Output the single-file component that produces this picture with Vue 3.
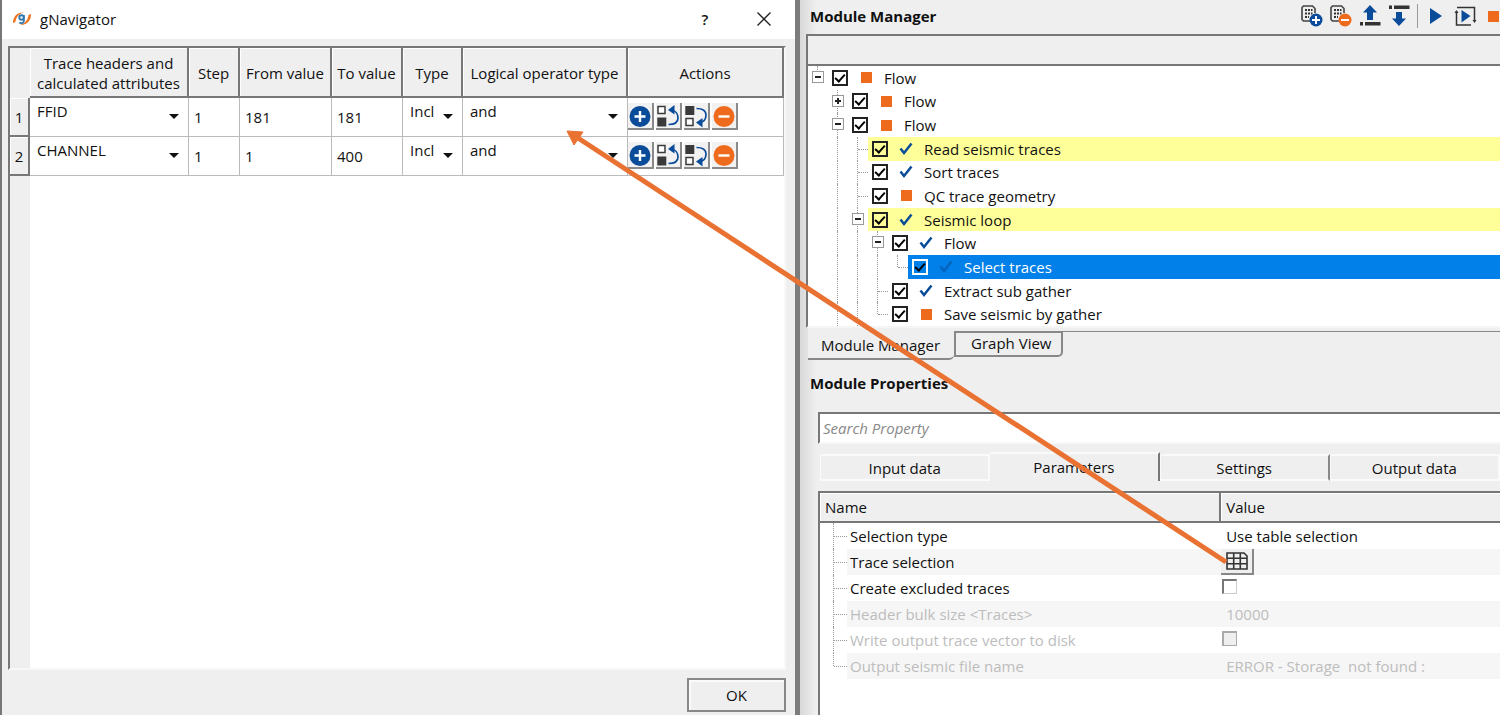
<script setup>
import { ref } from 'vue'

const rows = ref([
  { header: 'FFID', step: 1, from: 181, to: 181, type: 'Incl', op: 'and' },
  { header: 'CHANNEL', step: 1, from: 1, to: 400, type: 'Incl', op: 'and' }
])

const tree = ref([
  { name: 'Flow', guides: ['top minus'], state: 'stop', on: true },
  { name: 'Flow', guides: ['', 'line plus'], state: 'stop', on: true },
  { name: 'Flow', guides: ['', 'line minus'], state: 'stop', on: true },
  { name: 'Read seismic traces', guides: ['', 'line', 'line arm'], state: 'done', on: true, tone: 'yellow' },
  { name: 'Sort traces', guides: ['', 'line', 'line arm'], state: 'done', on: true },
  { name: 'QC trace geometry', guides: ['', 'line', 'line arm'], state: 'stop', on: true },
  { name: 'Seismic loop', guides: ['', 'line', 'line minus'], state: 'done', on: true, tone: 'yellow' },
  { name: 'Flow', guides: ['', 'line', 'line', 'line minus'], state: 'done', on: true },
  { name: 'Select traces', guides: ['', 'line', 'line', 'line', 'top arm'], state: 'done', on: true, tone: 'selected' },
  { name: 'Extract sub gather', guides: ['', 'line', 'line', 'line arm'], state: 'done', on: true },
  { name: 'Save seismic by gather', guides: ['', 'line', 'line', 'top arm'], state: 'stop', on: true }
])

const tabs = ['Input data', 'Parameters', 'Settings', 'Output data']
const activeTab = ref('Parameters')

const props = ref([
  { name: 'Selection type', kind: 'text', value: 'Use table selection' },
  { name: 'Trace selection', kind: 'grid' },
  { name: 'Create excluded traces', kind: 'check', on: false },
  { name: 'Header bulk size <Traces>', kind: 'text', value: '10000', off: true },
  { name: 'Write output trace vector to disk', kind: 'check', on: false, off: true },
  { name: 'Output seismic file name', kind: 'text', value: 'ERROR - Storage  not found :', off: true }
])
</script>

<template>
  <div class="screen">
    <section class="dialog" aria-label="gNavigator">
      <header class="titlebar">
        <svg class="logo" viewBox="0 0 20 16" aria-hidden="true">
          <path d="M1 12C1 6 5 1 12 1.600 7 3 4 6 3.500 11z" fill="#f0731f" />
          <path d="M19 3c.3 6-4 11.500-11 11 5-1.500 8-5 8.500-10z" fill="#f0731f" />
          <circle cx="9.500" cy="6.500" r="2.200" fill="none" stroke="#2f78ae" stroke-width="1.900" />
          <path d="M11.900 4v6c0 2.500-3.300 2.500-4.600 1.500" fill="none" stroke="#2f78ae" stroke-width="1.700" />
        </svg>
        <h1>gNavigator</h1>
        <button class="winbtn help" aria-label="Help">?</button>
        <button class="winbtn" aria-label="Close">
          <svg width="14" height="14" viewBox="0 0 14 14"><path d="M.5.5l13 13M13.500.5L.5 13.500" stroke="#222" stroke-width="1.400" /></svg>
        </button>
      </header>

      <div class="sheet">
        <table class="attrs">
          <colgroup>
            <col class="c-num" /><col class="c-head" /><col class="c-step" /><col class="c-from" />
            <col class="c-to" /><col class="c-type" /><col class="c-op" /><col class="c-act" />
          </colgroup>
          <thead>
            <tr>
              <th class="corner"></th>
              <th>Trace headers and<br />calculated attributes</th>
              <th>Step</th>
              <th>From value</th>
              <th>To value</th>
              <th>Type</th>
              <th>Logical operator type</th>
              <th>Actions</th>
            </tr>
          </thead>
          <tbody>
            <tr v-for="(r, i) in rows" :key="i">
              <th class="rownum" scope="row">{{ i + 1 }}</th>
              <td>
                <span class="pick"><select v-model="r.header" aria-label="Trace header"><option>FFID</option><option>CHANNEL</option></select></span>
              </td>
              <td class="num">{{ r.step }}</td>
              <td class="num">{{ r.from }}</td>
              <td class="num">{{ r.to }}</td>
              <td>
                <span class="pick"><select v-model="r.type" aria-label="Type"><option>Incl</option><option>Excl</option></select></span>
              </td>
              <td>
                <span class="pick"><select v-model="r.op" aria-label="Logical operator"><option>and</option><option>or</option></select></span>
              </td>
              <td>
                <div class="actions">
                  <button aria-label="Add row">
                    <svg viewBox="0 0 24 24"><circle cx="12" cy="12.500" r="10.500" fill="#0b4c9a" /><path d="M12 7v11M6.500 12.500h11" stroke="#fff" stroke-width="2.400" /></svg>
                  </button>
                  <button aria-label="Move up">
                    <svg viewBox="0 0 24 24" fill="none">
                      <rect x="2" y="2.500" width="7" height="7" fill="#fff" stroke="#3a3a3a" stroke-width="1.500" />
                      <rect x="1.300" y="13.500" width="9" height="9" fill="#3a3a3a" />
                      <path d="M12.500 20.500c6 0 9.500-2.500 9.500-6.500s-2.500-7.500-6.500-8" stroke="#0b4c9a" stroke-width="1.700" />
                      <path d="M12 6l6.500-5v9.500z" fill="#0b4c9a" />
                    </svg>
                  </button>
                  <button aria-label="Move down">
                    <svg viewBox="0 0 24 24" fill="none">
                      <rect x="1.300" y="2" width="9" height="9" fill="#3a3a3a" />
                      <rect x="2" y="14.500" width="7" height="7" fill="#fff" stroke="#3a3a3a" stroke-width="1.500" />
                      <path d="M12.500 4.500C18.500 4.500 22 7 22 11s-2.500 7-6.500 7.500" stroke="#0b4c9a" stroke-width="1.700" />
                      <path d="M12 18.500l6.500 5V14z" fill="#0b4c9a" />
                    </svg>
                  </button>
                  <button aria-label="Remove row">
                    <svg viewBox="0 0 24 24"><circle cx="12" cy="12.500" r="10.500" fill="#ee6a1c" /><path d="M6.500 12.500h11" stroke="#fff" stroke-width="2.400" /></svg>
                  </button>
                </div>
              </td>
            </tr>
          </tbody>
        </table>
      </div>

      <footer class="foot"><button class="ok">OK</button></footer>
    </section>

    <main class="side">
      <header class="bar">
        <h2>Module Manager</h2>
        <div class="tools">
          <button aria-label="Add module">
            <svg viewBox="0 0 24 24" fill="none">
              <path d="M11 17H3.500L2 15.500V3.500L3.500 2h9L15 4.500V9" stroke="#444" stroke-width="1.600" />
              <path d="M5 6h7.500M5 9.500h7.500M5 13h4" stroke="#333" stroke-width="2" stroke-dasharray="2 1" />
              <circle cx="16" cy="16" r="6.500" fill="#0b4c9a" /><path d="M16 12v8M12 16h8" stroke="#fff" stroke-width="1.900" />
            </svg>
          </button>
          <button aria-label="Remove module">
            <svg viewBox="0 0 24 24" fill="none">
              <path d="M11 17H3.500L2 15.500V3.500L3.500 2h9L15 4.500V9" stroke="#444" stroke-width="1.600" />
              <path d="M5 6h7.500M5 9.500h7.500M5 13h4" stroke="#333" stroke-width="2" stroke-dasharray="2 1" />
              <circle cx="16" cy="16" r="6.500" fill="#ee6a1c" /><path d="M12 16h8" stroke="#fff" stroke-width="1.900" />
            </svg>
          </button>
          <button aria-label="Move up">
            <svg viewBox="0 0 24 24"><path d="M12 1l7 7.500h-4V16H9V8.500H5z" fill="#0b4c9a" /><path d="M2 18h3v3.500H2zM7 18h15.500v3.500H7z" fill="#333" /></svg>
          </button>
          <button aria-label="Move down">
            <svg viewBox="0 0 24 24"><path d="M12 22l7-7.500h-4V8H9v6.500H5z" fill="#0b4c9a" /><path d="M2 1.500h3V5H2zM7 1.500h15.500V5H7z" fill="#333" /></svg>
          </button>
          <span class="sep"></span>
          <button aria-label="Run">
            <svg viewBox="0 0 24 24"><path d="M6 4l12 8-12 8z" fill="#0b4c9a" /></svg>
          </button>
          <button aria-label="Run all">
            <svg viewBox="0 0 24 24" fill="none">
              <path d="M3.500 7v14H18M4 3.500h17.500V17" stroke="#333" stroke-width="1.500" />
              <path d="M1.500 9l2-3 2 3zM19.500 16l2 3 2-3z" fill="#333" />
              <path d="M8.500 6l9 6-9 6.500z" fill="#0b4c9a" />
            </svg>
          </button>
          <button class="last" aria-label="Stop"><span class="square"></span></button>
        </div>
      </header>

      <div class="treehead"></div>
      <ul class="tree">
        <li v-for="(n, i) in tree" :key="i">
          <span v-for="(g, k) in n.guides" :key="k" class="guide" :class="g"></span>
          <label class="node" :class="n.tone">
            <input v-model="n.on" type="checkbox" />
            <span class="state">
              <span v-if="n.state === 'stop'" class="square"></span>
              <svg v-else width="14" height="14" viewBox="0 0 14 14"><path d="M1.500 6.500l3.500 4.500L12.500 1.500" fill="none" stroke="#0b4c9a" stroke-width="2.500" /></svg>
            </span>
            {{ n.name }}
          </label>
        </li>
      </ul>

      <nav class="views">
        <button class="view current">Module Manager</button>
        <button class="view">Graph View</button>
        <span class="rest"></span>
      </nav>

      <section class="properties">
        <h2>Module Properties</h2>
        <input class="search" type="text" placeholder="Search Property" aria-label="Search Property" />
        <div class="tabs" role="tablist">
          <button v-for="t in tabs" :key="t" role="tab" :aria-selected="t === activeTab" :class="{ active: t === activeTab }" @click="activeTab = t">{{ t }}</button>
        </div>
        <div class="propbox">
          <table class="props">
            <thead>
              <tr><th>Name</th><th>Value</th></tr>
            </thead>
            <tbody>
              <tr v-for="(p, i) in props" :key="p.name" :class="{ off: p.off }">
                <td>
                  <div class="pname"><span class="guide arm" :class="i === props.length - 1 ? 'top' : 'line'"></span><span class="ptext">{{ p.name }}</span></div>
                </td>
                <td class="pval">
                  <span v-if="p.kind === 'text'" class="ptxt">{{ p.value }}</span>
                  <button v-else-if="p.kind === 'grid'" class="gridbtn" aria-label="Edit table">
                    <svg width="22" height="18" viewBox="0 0 22 18" fill="none" stroke="#333" stroke-width="1.600"><path d="M1 1h17l3 3v13H1zM1 6.300h20M1 11.700h20M7.700 1v16M14.300 1v16" /></svg>
                  </button>
                  <input v-else v-model="p.on" type="checkbox" :disabled="p.off" :aria-label="p.name" />
                </td>
              </tr>
            </tbody>
          </table>
        </div>
      </section>
    </main>

    <svg class="arrow" viewBox="0 0 1500 715" preserveAspectRatio="none" aria-hidden="true">
      <path d="M1226 562L578 138" stroke="#e97132" stroke-width="5" />
      <path d="M567 131l16 1-9 13z" fill="#e97132" stroke="#e97132" stroke-width="1" />
    </svg>
  </div>
</template>

<style>
body {
  margin: 0;
  background: #efefef;
}
</style>

<style scoped>
*,
*::before,
*::after {
  box-sizing: border-box;
}
.screen {
  position: relative;
  display: flex;
  min-height: 100vh;
  overflow: hidden;
  background: #efefef;
  color: #111;
  font: 15px/20px "Open Sans", "Noto Sans", sans-serif;
}
button,
input,
select {
  font: inherit;
  color: inherit;
}
button {
  padding: 0;
  border: 0;
  background: none;
}
h1,
h2 {
  margin: 0;
  font-size: 15px;
}
h1 {
  flex: 1;
  font-weight: 400;
}
svg {
  display: block;
}

/* Dialog */
.dialog {
  display: flex;
  flex-direction: column;
  width: 53%;
  flex: none;
  border-left: 2px solid #777;
}
.titlebar {
  display: flex;
  align-items: center;
  height: 39px;
  padding: 0 22px 2px 10px;
  background: #fff;
}
.logo {
  width: 20px;
  height: 16px;
  margin-right: 8px;
}
.winbtn {
  display: grid;
  place-items: center;
  width: 18px;
  height: 24px;
}
.help {
  margin-right: 41px;
  font-weight: 600;
}
.sheet {
  flex: 1;
  margin: 7px 9px 0 6px;
  border: 2px solid #777;
  border-right-color: #f8f8f8;
  border-bottom-color: #f8f8f8;
  background: linear-gradient(90deg, #efefef 20px, #fff 20px);
}
.attrs {
  width: 100%;
  table-layout: fixed;
  border-collapse: separate;
  border-spacing: 0;
}
.c-num { width: 20px; }
.c-head { width: 159px; }
.c-step { width: 51px; }
.c-from { width: 92px; }
.c-to { width: 71px; }
.c-type { width: 60px; }
.c-op { width: 165px; }
.attrs th {
  padding: 0;
  font-weight: 400;
  background: #efefef;
}
.attrs thead th {
  height: 50px;
  padding-top: 2px;
  border-right: 2px solid #777;
  border-bottom: 2px solid #777;
  box-shadow: inset 1px 1px #fff;
  white-space: nowrap;
}
.attrs thead th.corner {
  border-color: #efefef;
  box-shadow: none;
}
.attrs td {
  height: 39px;
  padding: 0;
  border-right: 1px solid #bbb;
  border-bottom: 1px solid #bbb;
  background: #fff;
  vertical-align: top;
}
.attrs .rownum {
  border-right: 2px solid #777;
  border-bottom: 2px solid #777;
  box-shadow: inset 1px 1px #fff;
}
.attrs td.num {
  padding-left: 5px;
  vertical-align: middle;
}
.pick {
  position: relative;
  display: block;
}
.pick select {
  width: 100%;
  height: 26px;
  padding: 0 0 0 7px;
  border: 0;
  appearance: none;
  background: none;
}
.pick::after {
  content: "";
  position: absolute;
  right: 9px;
  top: 16px;
  border: 5px solid transparent;
  border-top-color: #111;
  border-bottom: 0;
  pointer-events: none;
}
.actions {
  display: flex;
  gap: 2px;
  padding-top: 5px;
}
.actions button {
  width: 26px;
  height: 27px;
  border-right: 2px solid #8a8a8a;
  border-bottom: 2px solid #8a8a8a;
  background: #f2f2f2;
}
.actions svg {
  width: 24px;
  height: 24px;
}
.foot {
  display: flex;
  justify-content: flex-end;
  padding: 8px 9px 3px;
}
.ok {
  width: 99px;
  height: 34px;
  border: 2px solid #888;
  box-shadow: inset 2px 2px #fafafa;
}

/* Module panel */
.side {
  display: flex;
  flex-direction: column;
  flex: 1;
  min-width: 0;
  padding-left: 6px;
  border-left: 5px solid #7c7c7c;
  background: linear-gradient(90deg, #d8d8d8, #efefef 16px);
}
.bar {
  display: flex;
  align-items: center;
  justify-content: space-between;
  height: 34px;
  padding: 0 0 2px 4px;
}
.tools {
  display: flex;
  align-items: center;
  gap: 5px;
}
.tools button,
.tools svg {
  width: 24px;
  height: 24px;
}
.tools .last {
  display: flex;
  align-items: center;
  width: 12px;
  margin-left: 6px;
}
.sep {
  width: 1px;
  height: 24px;
  margin: 0 1px;
  background: #999;
}
.square {
  width: 11px;
  height: 11px;
  background: #ee6a1c;
}
.treehead {
  height: 32px;
  border: 2px solid #777;
  border-right: 0;
  background: #efefef;
}
.tree {
  display: grid;
  grid-template-rows: repeat(11, 1fr);
  height: 262px;
  margin: 0;
  padding: 0;
  list-style: none;
  border-left: 2px solid #777;
  border-bottom: 2px solid #f5f5f5;
  background: #fff;
}
.tree li {
  display: flex;
  min-height: 0;
}
.guide {
  position: relative;
  flex: none;
  width: 20px;
}
.guide.line::before,
.guide.top::before {
  content: "";
  position: absolute;
  left: 9px;
  top: 0;
  bottom: 0;
  border-left: 1px dotted #999;
}
.guide.top::before {
  bottom: 50%;
}
.guide.arm::after {
  content: "";
  position: absolute;
  left: 10px;
  right: 0;
  top: 50%;
  border-top: 1px dotted #999;
}
.guide.plus::after,
.guide.minus::after {
  content: "";
  position: absolute;
  left: 4px;
  top: 5px;
  width: 12px;
  height: 12px;
  border: 1px solid #999;
  background: linear-gradient(#222, #222) center / 6px 2px no-repeat, #fff;
}
.guide.plus::after {
  background: linear-gradient(#222, #222) center / 6px 2px no-repeat, linear-gradient(#222, #222) center / 2px 6px no-repeat, #fff;
}
.node {
  display: flex;
  align-items: center;
  flex: 1;
  padding-left: 4px;
  white-space: nowrap;
}
.node.yellow {
  background: #ffff99;
}
.node.selected {
  background: #0080e8;
  color: #fff;
}
.node input {
  position: relative;
  width: 16px;
  height: 16px;
  margin: 0;
  border: 2px solid #222;
  appearance: none;
  background: #fff;
}
.node.yellow input {
  background: #ffff99;
}
.node.selected input {
  border-color: #fff;
  background: #0080e8;
}
.node input:checked::after {
  content: "";
  position: absolute;
  left: 3px;
  top: 0;
  width: 6px;
  height: 10px;
  border: solid #000;
  border-width: 0 2px 2px 0;
  transform: rotate(42deg);
}
.state {
  display: grid;
  place-items: center;
  width: 14px;
  margin: 0 11px;
}
.selected .state {
  opacity: 0.55;
}
.views {
  display: flex;
  align-items: flex-start;
  height: 32px;
  padding-left: 2px;
}
.view {
  height: 26px;
  margin-top: 3px;
  padding: 0 10px 2px 15px;
  border: 2px solid #888;
  border-radius: 0 0 5px 0;
  background: #efefef;
}
.view.current {
  height: 32px;
  margin: 0;
  padding: 4px 14px 0 13px;
  border-width: 0 0 2px;
}
.rest {
  flex: 1;
  margin-top: 3px;
  border-top: 1px solid #888;
}

/* Properties */
.properties {
  display: flex;
  flex-direction: column;
  flex: 1;
  padding: 13px 0 0 12px;
}
.properties h2 {
  margin-left: -8px;
}
.search {
  width: 100%;
  height: 32px;
  margin-top: 19px;
  padding: 0 3px;
  border: 2px solid #777;
  border-width: 2px 0 0 2px;
  border-bottom: 2px solid #f8f8f8;
  border-radius: 0;
  background: #fff;
}
.search::placeholder {
  color: #888;
  font-style: italic;
  opacity: 1;
}
.tabs {
  display: flex;
  align-items: flex-end;
  height: 37px;
  padding-left: 2px;
}
.tabs button {
  flex: 1;
  height: 27px;
  border: 2px solid #fafafa;
  border-left-width: 1px;
  border-radius: 3px 0 0 0;
}
.tabs button:nth-child(3) {
  border-right-color: #888;
}
.tabs button.active {
  height: 29px;
  padding-bottom: 2px;
  border-width: 2px 2px 0 0;
  border-right-color: #777;
}
.propbox {
  flex: 1;
  margin-top: 10px;
  border-top: 2px solid #777;
  border-left: 2px solid #777;
  background: #fff;
}
.props {
  width: 100%;
  table-layout: fixed;
  border-collapse: separate;
  border-spacing: 0;
}
.props th {
  height: 30px;
  padding: 0 5px;
  border-bottom: 2px solid #777;
  background: #efefef;
  box-shadow: inset 1px 1px #fff;
  font-weight: 400;
  text-align: left;
}
.props th:first-child {
  width: 59%;
  border-right: 2px solid #777;
}
.props td {
  height: 26px;
  padding: 0;
}
.pname {
  display: flex;
  height: 26px;
}
.pname .guide {
  width: 27px;
}
.pname .guide::before {
  left: 13px;
}
.pname .guide::after {
  left: 14px;
}
.ptext {
  flex: 1;
  padding: 3px;
}
.props tr:nth-child(even) .ptext,
.props tr:nth-child(even) .pval {
  background: #f6f6f6;
}
.off {
  color: #bdbdbd;
}
.ptxt {
  padding-left: 5px;
  white-space: pre;
}
.gridbtn {
  display: grid;
  place-items: center;
  width: 33px;
  height: 26px;
  border-right: 2px solid #888;
  border-bottom: 2px solid #888;
  background: #efefef;
}
.pval input {
  display: block;
  width: 15px;
  height: 15px;
  margin: 0 0 3px 1px;
  appearance: none;
  border: 2px solid #777;
  border-right: 1px solid #ccc;
  border-bottom: 1px solid #ccc;
}
.pval input:disabled {
  border-color: #aaa;
  background: #efefef;
}
.arrow {
  position: absolute;
  inset: 0;
  width: 100%;
  height: 100%;
  pointer-events: none;
}
</style>
